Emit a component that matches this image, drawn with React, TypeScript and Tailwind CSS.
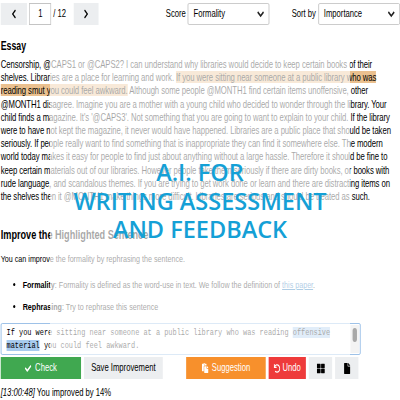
import { FaChevronLeft, FaChevronRight, FaCheck, FaPaste, FaUndo, FaThLarge, FaFile } from "react-icons/fa";

const Hl = ({ children }: { children: string }) => <span className="bg-[#eac08f]">{children}</span>;

function Select({ value, w }: { value: string; w: string }) {
  return (
    <div className={`flex h-[22px] items-center justify-between rounded-[2px] border border-[#c4c4c4] pl-[7px] pr-[5px] text-[10.5px] ${w}`}>
      <span>{value}</span>
      <svg width="12" height="10" viewBox="0 0 12 10" fill="none" stroke="#222" strokeWidth="1.8">
        <path d="M2 3 6 7 10 3" />
      </svg>
    </div>
  );
}

export default function App() {
  return (
    <div className="relative h-[400px] w-[400px] overflow-hidden bg-white font-['Liberation_Sans',sans-serif] text-black">
      {/* the shot is squeezed sideways, so the page is laid out wide and scaled */}
      <div className="h-[400px] w-[548px] origin-top-left scale-x-[0.73] pt-[3px]">
        <div className="flex h-[22px] items-center pl-[1px] text-[10.5px]">
          <button className="flex h-[22px] w-[37px] items-center justify-center bg-[#eceef0]">
            <FaChevronLeft size={10} />
          </button>
          <div className="ml-[3px] flex h-[22px] w-[30px] items-center justify-center border border-[#c4c4c4]">1</div>
          <span className="ml-[3px] w-[22px] whitespace-nowrap">/ 12</span>
          <button className="ml-[6px] flex h-[22px] w-[35px] items-center justify-center bg-[#eceef0]">
            <FaChevronRight size={10} />
          </button>
          <span className="ml-[92px] mr-[5px] w-[25px]">Score</span>
          <Select value="Formality" w="w-[113px]" />
          <span className="ml-[31px] mr-[6px] w-[30px] whitespace-nowrap">Sort by</span>
          <Select value="Importance" w="w-[114px]" />
        </div>

        <h2 className="mt-[14px] pl-[1px] text-[12px] font-bold leading-[14px]">Essay</h2>

        <p className="mt-[5px] w-[548px] whitespace-nowrap pl-[1px] text-[10.6px] leading-[13.2px] tracking-[-0.1px]">
          Censorship, @CAPS1 or @CAPS2? I can understand why libraries would decide to keep certain books of their<br />
          shelves. Libraries are a place for learning and work. <Hl>If you were sitting near someone at a public library who was</Hl><br />
          <Hl>reading smut you could feel awkward.</Hl> Although some people @MONTH1 find certain items unoffensive, other<br />
          @MONTH1 disagree. Imagine you are a mother with a young child who decided to wonder through the library. Your<br />
          child finds a magazine. It's '@CAPS3'. Not something that you are going to want to explain to your child. If the library<br />
          were to have not kept the magazine, it never would have happened. Libraries are a public place that should be taken<br />
          seriously. If people really want to find something that is inappropriate they can find it somewhere else. The modern<br />
          world today makes it easy for people to find just about anything without a large hassle. Therefore it should be fine to<br />
          keep certain materials out of our libraries. However people take them seriously if there are dirty books, or books with<br />
          rude language, and scandalous themes. If you are trying to get work done or learn and there are distracting items on<br />
          the shelves then it @MONTH1 make things more difficult. Libraries are serious and should be treated as such.
        </p>

        <h3 className="mt-[25px] pl-[1px] text-[12.5px] font-bold leading-[14px]">Improve the Highlighted Sentence</h3>

        <p className="mt-[10px] pl-[1px] text-[9.8px] leading-[13px]">You can improve the formality by rephrasing the sentence.</p>

        <ul className="mt-[13px] list-disc pl-[31px] text-[9.8px] leading-[13px]">
          <li>
            <b>Formality</b>: Formality is defined as the word-use in text. We follow the definition of{" "}
            <span className="text-[#1a6fb5] underline">this paper</span>.
          </li>
          <li className="mt-[9px]">
            <b>Rephrasing</b>: Try to rephrase this sentence
          </li>
        </ul>

        <div className="relative mt-[10px] ml-[1px] h-[32px] w-[493px] rounded-[2px] border border-[#8fb8e4] pl-[7px] pt-[3px] font-['Liberation_Mono',monospace] text-[9.48px] leading-[12.6px]">
          <div className="w-[475px]">
            If you were sitting near someone at a public library who was reading <span className="bg-[#a8cbee]">offensive material</span> you could feel awkward.
          </div>
          <div className="absolute right-[1px] top-[1px] h-[28px] w-[12px] bg-[#f3f3f3] p-[3px]">
            <div className="h-[14px] rounded-full bg-[#a8a8a8]" />
          </div>
        </div>

        <div className="mt-[2px] ml-[1px] flex h-[22px] gap-[4px] text-[10.5px]">
          <button className="flex w-[110px] items-center justify-center gap-[5px] bg-[#40a850] text-white">
            <FaCheck size={9} /> Check
          </button>
          <button className="w-[108px] bg-[#eceef0]">Save Improvement</button>
          <button className="ml-[28px] flex w-[109px] items-center justify-center gap-[4px] bg-[#f7902c] text-white">
            <FaPaste size={10} /> Suggestion
          </button>
          <button className="flex w-[51px] items-center justify-center gap-[3px] bg-[#ee3b3b] text-white">
            <FaUndo size={9} /> Undo
          </button>
          <button className="flex w-[32px] items-center justify-center bg-[#eceef0]">
            <FaThLarge size={11} />
          </button>
          <button className="flex w-[32px] items-center justify-center bg-[#eceef0]">
            <FaFile size={11} />
          </button>
        </div>

        <p className="mt-[6px] pl-[1px] text-[10.5px] leading-[14px]">
          <i>[13:00:48]</i> You improved by 14%
        </p>
      </div>

      {/* white wash under the title */}
      <div className="absolute left-[50px] top-[58px] h-[299px] w-[300px] bg-white/65" />
      <div className="absolute left-0 top-[158px] w-full text-center font-['Open_Sans',sans-serif] text-[23.5px] font-semibold leading-[28.5px] text-[#14a0d6]">
        A.I. FOR<br />WRITING ASSESSMENT<br />AND FEEDBACK
      </div>
    </div>
  );
}
